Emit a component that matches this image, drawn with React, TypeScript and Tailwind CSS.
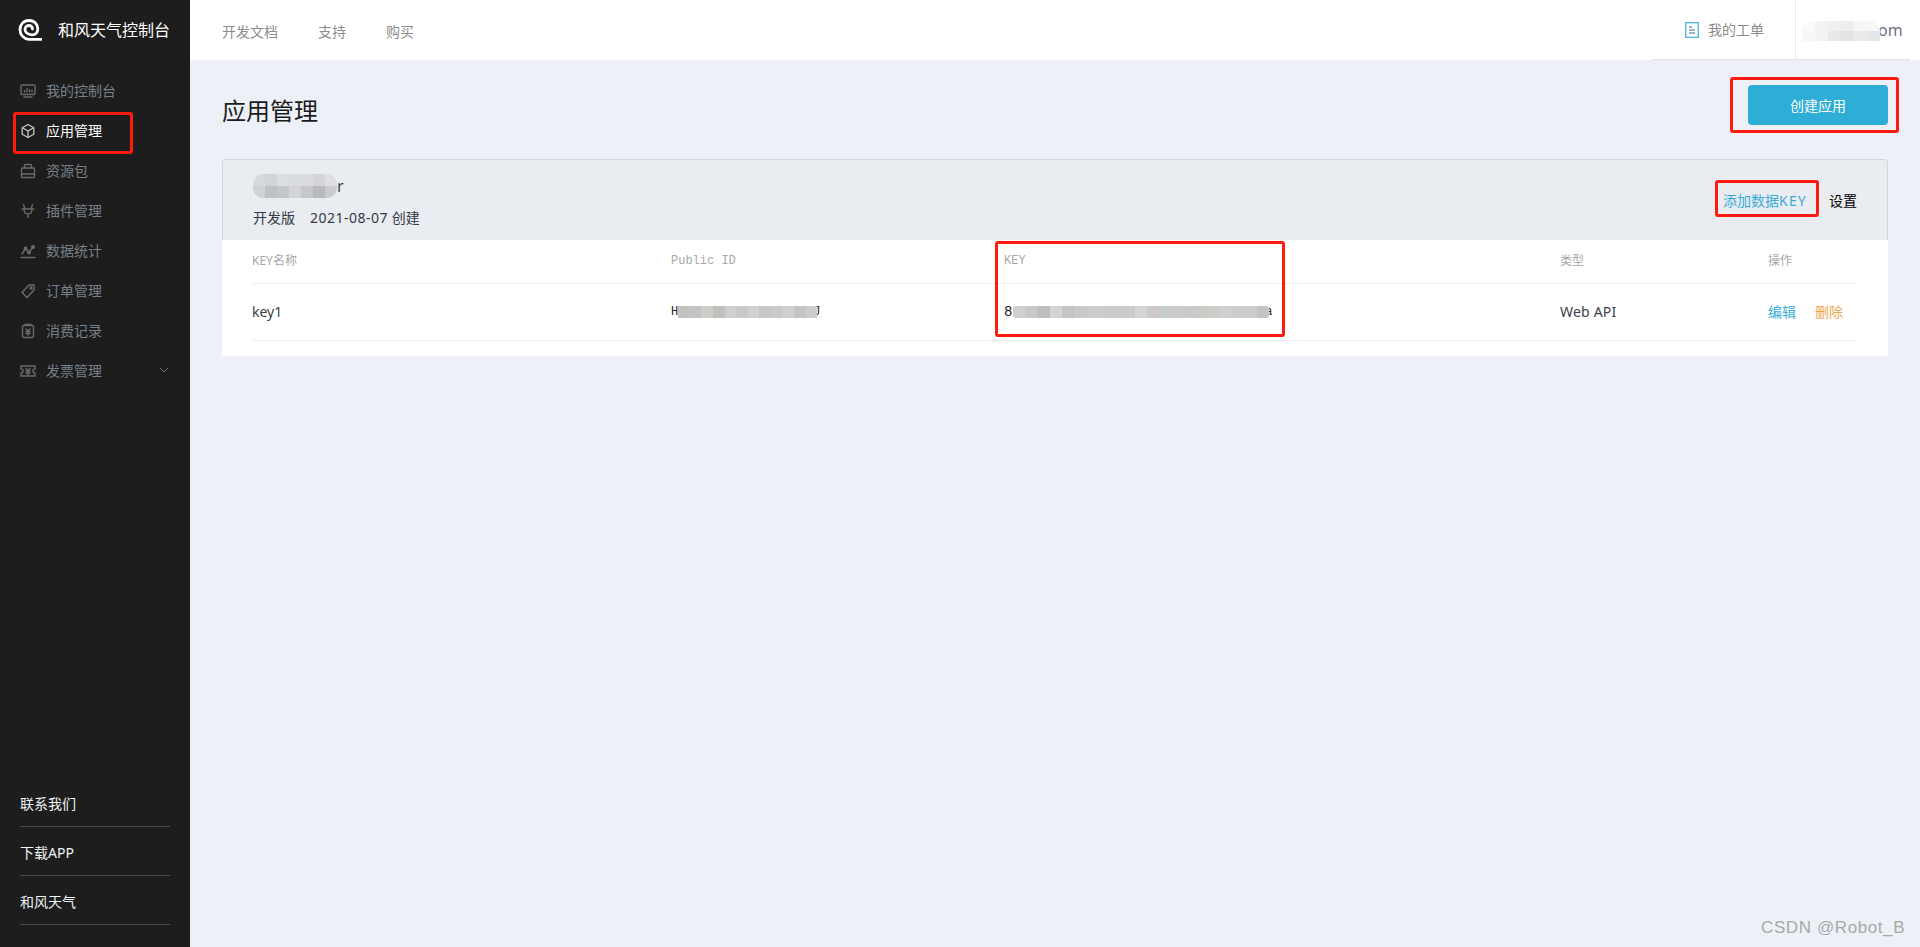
import React from "react";

const cjk = "font-['Noto_Sans','Noto_Sans_CJK_SC',sans-serif]";

function Mosaic({ rows, cell = 12, h, className = "" }: { rows: string[][]; cell?: number; h: number; className?: string }) {
  return (
    <span className={"inline-flex flex-col overflow-hidden align-middle " + className}>
      {rows.map((r, i) => (
        <span key={i} className="flex">
          {r.map((c, j) => (
            <span key={j} style={{ width: cell, height: h, background: c }} className="block shrink-0" />
          ))}
        </span>
      ))}
    </span>
  );
}

const Svg = ({ children }: { children: React.ReactNode }) => (
  <svg width="16" height="16" viewBox="0 0 16 16" fill="none" stroke="#6a6a6a" strokeWidth="1.4" strokeLinecap="round" strokeLinejoin="round" className="shrink-0">
    {children}
  </svg>
);

const icons: Record<string, React.ReactNode> = {
  monitor: (
    <Svg>
      <rect x="1" y="2" width="14" height="9.5" rx="1" />
      <path d="M4 14h8M4.500 9V7.500M7 9V5.500M9.500 9V6.500M12 9V7" />
    </Svg>
  ),
  bag: (
    <Svg>
      <rect x="1.500" y="5" width="13" height="9.500" rx="1" />
      <path d="M4.500 5V2.500a1 1 0 011-1h5a1 1 0 011 1V5M1.500 11h13" />
    </Svg>
  ),
  plug: (
    <Svg>
      <path d="M3.500 2l1.500 3.500M12.500 2L11 5.500M2 6h12M4 6c0 3.500 2 5 4 5s4-1.500 4-5M8 11v3.500" />
    </Svg>
  ),
  stats: (
    <Svg>
      <path d="M1 14.500h14M2 11l3.500-5.500 3.500 4 4-5.500" />
      <circle cx="5.500" cy="5.500" r="1.300" fill="#6a6a6a" />
      <circle cx="9" cy="9.500" r="1.300" fill="#6a6a6a" />
      <circle cx="13" cy="4" r="1.300" fill="#6a6a6a" />
    </Svg>
  ),
  tag: (
    <Svg>
      <path d="M9 2h5v5l-7 7.500-5-5z" />
      <circle cx="11" cy="5" r="1" />
    </Svg>
  ),
  receipt: (
    <Svg>
      <rect x="2.500" y="2.500" width="11" height="12" rx="1.500" />
      <path d="M5 1.500h6M6 6l2 2 2-2M6 8.500h4M6 10.500h4M8 8v4" />
    </Svg>
  ),
  invoice: (
    <Svg>
      <path d="M1 3h14v3a2 2 0 000 4v3H1v-3a2 2 0 000-4z" />
      <path d="M6 5.500l2 2 2-2M6 8h4M6 10h4M8 7.500V12" />
    </Svg>
  ),
};

const nav: [string, string, boolean][] = [
  ["monitor", "我的控制台", false],
  ["cube", "应用管理", true],
  ["bag", "资源包", false],
  ["plug", "插件管理", false],
  ["stats", "数据统计", false],
  ["tag", "订单管理", false],
  ["receipt", "消费记录", false],
  ["invoice", "发票管理", false],
];

function Red({ className }: { className: string }) {
  return <div className={"absolute border-[3px] border-[#fe1a0f] rounded-[3px] pointer-events-none " + className} />;
}

const keyCells = ["#cfcfcf","#c9c8c8","#bfbebc","#d3d4d5","#c6c4c4","#c8c9c9","#cfcbc9","#c8cccd","#cbcbcb","#cccaca","#d4d5d6","#cdc9c8","#c7cccc","#cdcbc9","#c9c8ca","#cccbc8","#cdcdca","#cdd1d1","#cbcbca","#cccccc","#c5c4c3"];
const pubCells = ["#c2c2c0","#c2c6c8","#cfcecb","#c0bfbc","#cdd0d2","#cbc9c6","#cfd1d3","#c7c6c3","#c8cbcc","#d0d1cc","#c3c4c6","#cfcdcb"];

export default function App() {
  return (
    <div className={"relative flex h-[947px] w-[1920px] overflow-hidden bg-[#edf0f7] " + cjk}>
      <aside className="flex w-[190px] shrink-0 flex-col bg-[#1d1d1d]">
        <div className="flex h-[60px] items-center pl-[18px]">
          <svg width="24" height="22" viewBox="0 0 24 22" fill="none" stroke="#fff" strokeWidth="2.800" strokeLinecap="round" className="-mt-[1px] shrink-0">
            <path d="M23 20.300H11C5.500 19.800 2 15.500 2 10.500C2 5.500 5.500 1.500 11 1.500C16.500 1.500 19.800 5.500 19.800 10C19.800 14 17 16 14 15.800C10 15.500 7 13.500 7 10.500C7 8 9 6.500 11 6.500C13 6.500 14.500 8 14.500 10" />
          </svg>
          <span className="ml-[16px] text-[16px] leading-none text-white">和风天气控制台</span>
        </div>
        <nav className="flex flex-col pt-[11px]">
          {nav.map(([icon, label, active], i) => (
            <div key={label} className="flex h-[40px] items-center pl-[20px]">
              {active ? (
                <svg width="16" height="16" viewBox="0 0 16 16" fill="none" stroke="#c8c8c8" strokeWidth="1.300" strokeLinejoin="round" className="shrink-0">
                  <path d="M8 1.500l5.800 3.200v6.600L8 14.500l-5.800-3.200V4.700z" />
                  <path d="M2.800 5L8 8l5.200-3M8 8v6" />
                </svg>
              ) : (
                icons[icon]
              )}
              <span className={"ml-[10px] text-[14px] leading-none " + (active ? "text-white" : "text-[#76808a]")}>{label}</span>
              {i === 7 && (
                <svg width="10" height="6" viewBox="0 0 10 6" fill="none" stroke="#6f6f6f" strokeWidth="1" className="-mt-[3px] ml-[57px]">
                  <path d="M1 1l4 4 4-4" />
                </svg>
              )}
            </div>
          ))}
        </nav>
        <div className="mt-auto flex flex-col px-[20px] pb-[22px]">
          {["联系我们", "下载APP", "和风天气"].map((t) => (
            <div key={t} className="flex h-[49px] items-center border-b border-[#4a4a4a] pt-[4px] text-[14px] leading-none text-[#eef4f4]">
              {t}
            </div>
          ))}
        </div>
      </aside>

      <div className="flex min-w-0 flex-1 flex-col">
        <header className="flex h-[60px] shrink-0 items-center bg-white pl-[32px] pr-[10px]">
          <div className="flex gap-[40px] pt-[4px] text-[14px] leading-none text-[#8c8c8c]">
            <span>开发文档</span>
            <span>支持</span>
            <span>购买</span>
          </div>
          <div className="ml-auto flex h-full w-[258px] items-center border-b border-[#e2e2e2]">
            <div className="flex h-full w-[143px] items-center pl-[33px]">
              <svg width="14" height="16" viewBox="0 0 14 16" fill="none" stroke="#4fb3dc" strokeWidth="1.300" className="shrink-0">
                <rect x="0.700" y="0.700" width="12.600" height="14.600" />
                <path d="M4 5h3M4 8h6M4 11h6" stroke="#7b9fb3" />
              </svg>
              <span className="ml-[9px] text-[14px] leading-none text-[#8c8c8c]">我的工单</span>
            </div>
            <div className="flex h-full flex-1 items-center border-l border-[#ececec] pl-[6px]">
              <Mosaic
                cell={13}
                h={10}
                rows={[
                  ["#fafafa", "#f3f3f3", "#f0f0f0", "#eeeeee", "#f6f6f6", "#f7f7f7"],
                  ["#f7f7f7", "#f3f3f3", "#e6e8ea", "#e2e4e6", "#ecebea", "#e6e7e9"],
                ]}
                className="relative z-10 mt-[2px] rounded-t-[10px]"
              />
              <span className="-ml-[2px] text-[16px] leading-none text-[#6d7480]">om</span>
            </div>
          </div>
        </header>

        <main className="flex-1 px-[32px]">
          <div className="flex items-start justify-between pt-[25px]">
            <h1 className="pt-[11px] text-[24px] leading-[30px] text-[#1b1b1b]">应用管理</h1>
            <button className="h-[40px] w-[140px] rounded-[4px] bg-[#2eaed6] text-[14px] text-white">创建应用</button>
          </div>

          <section className="mt-[33px]">
            <div className="flex h-[81px] justify-between rounded-t-[4px] border border-b-0 border-[#d2d6de] bg-[#e9ecf1] px-[30px]">
              <div className="pt-[14px]">
                <div className="flex h-[24px] items-center text-[16px] leading-none text-[#3b4046]">
                  <Mosaic
                    h={12}
                    rows={[
                      ["#d6d9dc", "#d2d4d7", "#dcdfe2", "#dadce0", "#d9dbde", "#d3d5d9", "#dcdee1"],
                      ["#cfd1d4", "#bfc1c4", "#c4c6c9", "#d2d4d6", "#c5c7ca", "#b9babd", "#c9cbce"],
                    ]}
                    className="rounded-[10px]"
                  />
                  <span>r</span>
                </div>
                <div className="mt-[10px] flex text-[14px] leading-[20px] text-[#333a44]">
                  <span>开发版</span>
                  <span className="ml-[15px]">
                    <span className="tracking-[0.5px]">2021-08-07</span> 创建
                  </span>
                </div>
              </div>
              <div className="flex items-center gap-[22px] pt-[1px] text-[14px] leading-none">
                <span className="text-[#39abd6]">
                  添加数据<span className="tracking-[1.2px]">KEY</span>
                </span>
                <span className="text-black">设置</span>
              </div>
            </div>

            <div className="bg-white px-[30px] pb-[15px]">
              <div className="grid h-[44px] grid-cols-[419px_333px_556px_208px_90px] items-center border-b border-[#edeff5] pb-[2px] text-[12px] leading-none text-[#a8a8a8]">
                <span>KEY名称</span>
                <span className="font-['Liberation_Mono',monospace]">Public ID</span>
                <span className="font-['Liberation_Mono',monospace]">KEY</span>
                <span>类型</span>
                <span>操作</span>
              </div>
              <div className="grid h-[57px] grid-cols-[419px_333px_556px_208px_90px] items-center border-b border-[#edeff5] text-[14px] leading-none text-[#3a3f46]">
                <span>key1</span>
                <span className="flex items-center font-['Liberation_Mono',monospace] text-[12px] text-[#222]">
                  H
                  <Mosaic cell={11.600} h={12} rows={[pubCells]} className="relative z-10" />
                  <span className="-ml-[4px]">J</span>
                </span>
                <span className="flex items-center font-['Liberation_Mono',monospace] text-[12px] text-[#222]">
                  <span className="text-[14px]">8</span>
                  <Mosaic cell={12.200} h={12} rows={[keyCells]} className="relative z-10 ml-[1px] rounded-[3px]" />
                  <span className="-ml-[4px]">a</span>
                </span>
                <span className="tracking-[0.2px]">Web API</span>
                <span className="flex gap-[19px]">
                  <span className="text-[#39abd6]">编辑</span>
                  <span className="text-[#eda64f]">删除</span>
                </span>
              </div>
            </div>
          </section>
        </main>
      </div>

      <Red className="left-[13px] top-[112px] h-[42px] w-[120px]" />
      <Red className="left-[1730px] top-[77px] h-[56px] w-[169px]" />
      <Red className="left-[1715px] top-[180px] h-[37px] w-[104px]" />
      <Red className="left-[995px] top-[241px] h-[96px] w-[290px]" />
      <div className="absolute left-[1761px] top-[917px] text-[17px] leading-[22px] tracking-[0.6px] text-[#a8a8a8] font-['Liberation_Sans',sans-serif]">
        CSDN @Robot_B
      </div>
    </div>
  );
}
